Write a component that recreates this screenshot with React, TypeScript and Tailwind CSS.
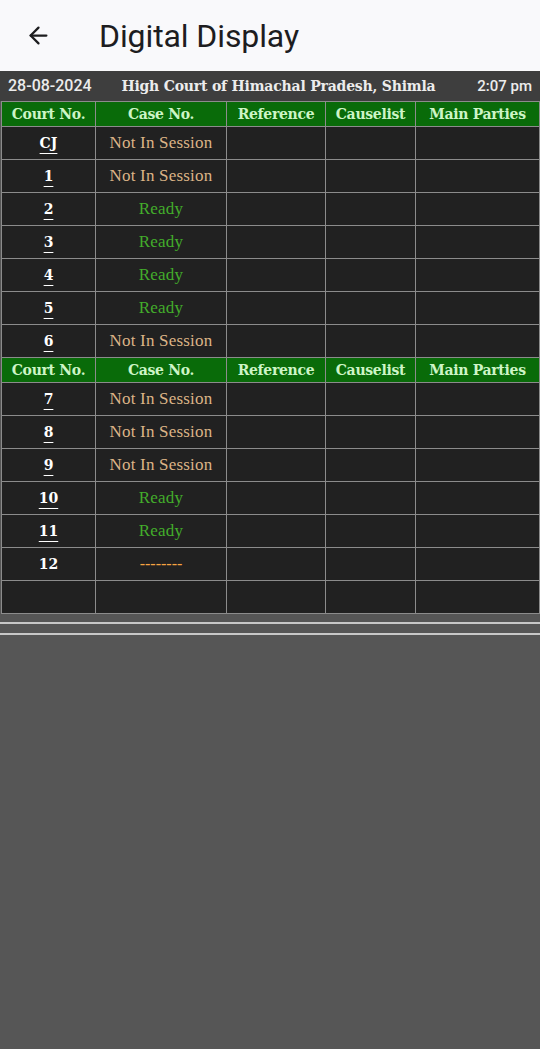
import { ArrowLeft } from 'lucide-react'

type Row = { court: string; status: 'off' | 'ready' | 'none' | 'empty'; link: boolean }

const firstBlock: Row[] = [
  { court: 'CJ', status: 'off', link: true },
  { court: '1', status: 'off', link: true },
  { court: '2', status: 'ready', link: true },
  { court: '3', status: 'ready', link: true },
  { court: '4', status: 'ready', link: true },
  { court: '5', status: 'ready', link: true },
  { court: '6', status: 'off', link: true },
]

const secondBlock: Row[] = [
  { court: '7', status: 'off', link: true },
  { court: '8', status: 'off', link: true },
  { court: '9', status: 'off', link: true },
  { court: '10', status: 'ready', link: true },
  { court: '11', status: 'ready', link: true },
  { court: '12', status: 'none', link: false },
  { court: '', status: 'empty', link: false },
]

const cell = 'border border-[#8c8c8c] text-center p-0'

function HeaderRow() {
  const heads = ['Court No.', 'Case No.', 'Reference', 'Causelist', 'Main Parties']
  return (
    <tr className="h-[25px] bg-[#096b09]">
      {heads.map((h) => (
        <th
          key={h}
          className={`${cell} font-['DejaVu_Serif',serif] text-[14px] font-bold text-[#cdf5c6] tracking-[-0.3px]`}
        >
          {h}
        </th>
      ))}
    </tr>
  )
}

function Status({ s }: { s: Row['status'] }) {
  if (s === 'off') return <span className="text-[#dcb487]">Not In Session</span>
  if (s === 'ready') return <span className="text-[#43ad2b]">Ready</span>
  if (s === 'none') return <span className="text-[#f5a442] text-[16px] tracking-[0px]">--------</span>
  return null
}

function DataRow({ row }: { row: Row }) {
  return (
    <tr className="h-[33px] bg-[#212121]">
      <td className={`${cell} font-['DejaVu_Serif',serif] text-[14px] font-bold text-white`}>
        {row.link ? (
          <span className="underline underline-offset-[5px] decoration-[1px]">{row.court}</span>
        ) : (
          row.court
        )}
      </td>
      <td className={`${cell} font-['Liberation_Serif',serif] text-[17px] tracking-[0.2px]`}>
        <Status s={row.status} />
      </td>
      <td className={cell}></td>
      <td className={cell}></td>
      <td className={cell}></td>
    </tr>
  )
}

export default function App() {
  return (
    <div className="w-[540px] h-[1049px] flex flex-col bg-[#565656]">
      {/* top bar */}
      <div className="h-[71px] shrink-0 bg-[#f9f9fb] flex items-center">
        <ArrowLeft className="ml-[25px] w-[27px] h-[27px] text-[#1d1d1f]" strokeWidth={2} />
        <h1 className="ml-[47px] text-[32px] text-[#1d1d1f] font-['Roboto',sans-serif] tracking-[-0.1px]">
          Digital Display
        </h1>
      </div>

      {/* date / court bar */}
      <div className="h-[30px] bg-[#3e3e3e] flex items-center justify-between pl-[8px] pr-[8px] text-[#ececec]">
        <span className="text-[16px] font-medium font-['Roboto',sans-serif]">28-08-2024</span>
        <span className="font-['DejaVu_Serif',serif] text-[14px] font-bold tracking-[-0.2px] mr-[12px]">
          High Court of Himachal Pradesh, Shimla
        </span>
        <span className="text-[15px] font-medium font-['Roboto',sans-serif]">2:07 pm</span>
      </div>

      <table className="ml-[1px] w-[538px] border-collapse table-fixed">
        <colgroup>
          <col className="w-[94px]" />
          <col className="w-[131px]" />
          <col className="w-[99px]" />
          <col className="w-[90px]" />
          <col className="w-[124px]" />
        </colgroup>
        <tbody>
          <HeaderRow />
          {firstBlock.map((r) => (
            <DataRow key={r.court} row={r} />
          ))}
          <HeaderRow />
          {secondBlock.map((r, i) => (
            <DataRow key={'b' + i} row={r} />
          ))}
        </tbody>
      </table>

      <div className="mt-[8px] h-[2px] bg-[#c8c8c8]" />
      <div className="mt-[9px] h-[2px] bg-[#c8c8c8]" />
    </div>
  )
}
